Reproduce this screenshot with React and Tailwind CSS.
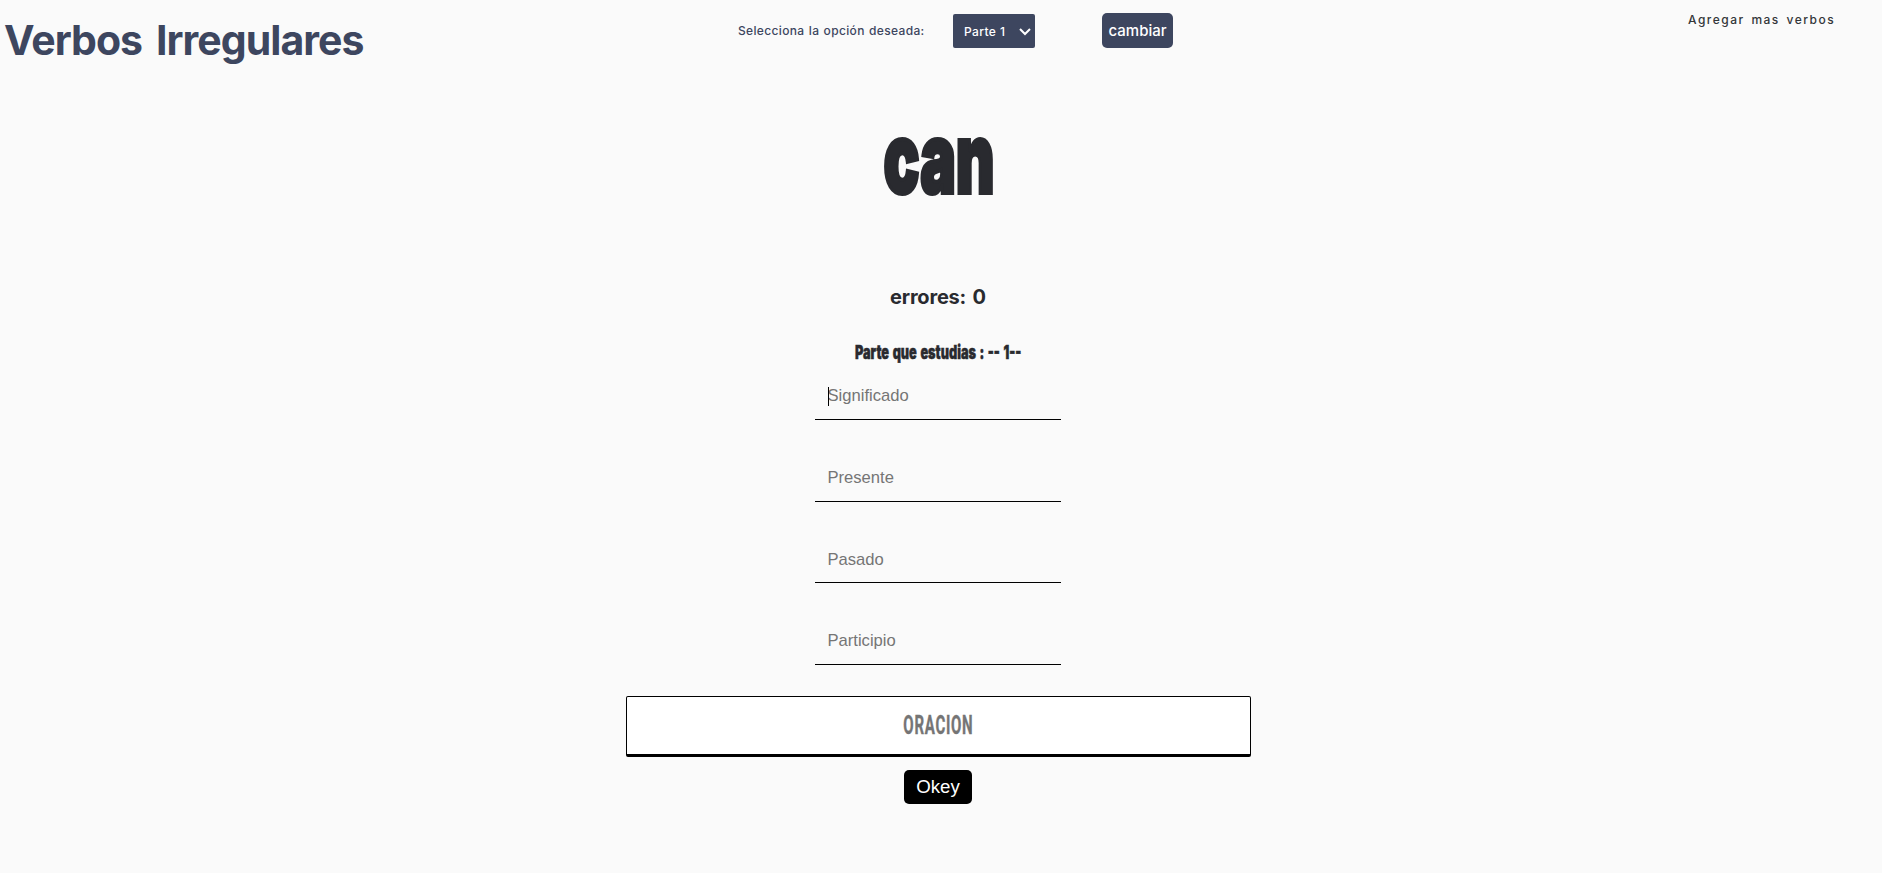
import React from "react";

const fields = [
  { name: "Significado", box: "h-[47px]", pad: "pb-px" },
  { name: "Presente", box: "mt-[35px] h-[47px]", pad: "pb-px" },
  { name: "Pasado", box: "mt-[34px] h-[47px]", pad: "pt-px" },
  { name: "Participio", box: "mt-[35px] h-[47px]", pad: "pb-px" },
];

function Header() {
  return (
    <header className="flex h-[96px] items-start font-['Inter','Noto_Sans',sans-serif] text-[#3d465f]">
      <h1 className="w-[738px] pl-1 pt-[15px] text-[41px] leading-[50px] font-bold whitespace-nowrap tracking-[-0.95px] [word-spacing:5px]">
        Verbos Irregulares
      </h1>
      <span className="w-[215px] pt-[22px] text-[12px] leading-[18px] font-medium whitespace-nowrap tracking-[0.35px] [word-spacing:0.7px]">
        Selecciona la opción deseada:
      </span>
      <button className="mt-[14px] flex h-[34px] w-[82px] items-center justify-between rounded-[2px] bg-[#3d465f] pl-[11px] pr-[4px] pt-[2px] text-[12px] font-medium text-white">
        <span className="whitespace-nowrap tracking-[0.4px]">Parte 1</span>
        <svg className="h-[12px] w-[12px]" viewBox="0 0 12 12" fill="none" stroke="currentColor" strokeWidth="2">
          <path d="M1 3 L6 8 L11 3" />
        </svg>
      </button>
      <button className="ml-[67px] mt-[13px] h-[35px] w-[71px] rounded-[5px] bg-[#3d465f] pt-px text-[15px] font-medium text-white">
        cambiar
      </button>
      <a className="ml-[515px] pt-[11px] text-[12px] leading-[18px] font-medium whitespace-nowrap tracking-[1.5px] text-[#333639] [word-spacing:2px]">
        Agregar mas verbos
      </a>
    </header>
  );
}

export default function App() {
  return (
    <div className="h-[873px] overflow-hidden bg-[#fafafa] text-[#292a2f]">
      <Header />
      <main className="flex w-[1876px] flex-col items-center">
        <h2 className="flex h-[140px] w-[300px] items-start justify-center pl-[3px] font-['Inter',sans-serif] text-[98px] leading-[124px] font-black">
          <span className="inline-block scale-x-[0.61] [-webkit-text-stroke:4px_#292a2f]">can</span>
        </h2>
        <p className="mt-[46px] h-[30px] font-['Inter',sans-serif] text-[20px] leading-[30px] font-bold whitespace-nowrap tracking-[-0.2px] [word-spacing:2px]">
          errores: 0
        </p>
        <p className="mt-[26px] flex h-[30px] w-[170px] justify-center font-['Inter',sans-serif] text-[19px] leading-[30px] font-black whitespace-nowrap">
          <span className="inline-block scale-x-[0.67] [-webkit-text-stroke:0.5px_#292a2f] [word-spacing:1.5px]">Parte que estudias : -- 1--</span>
        </p>
        <div className="mt-[5px] flex flex-col">
          {fields.map((field, i) => (
            <div key={field.name} className={"relative w-[246px] border-b border-black " + field.box}>
              <input
                placeholder={field.name}
                className={"block h-[46px] w-full bg-transparent pl-[12.5px] pr-[12px] font-['Liberation_Sans',sans-serif] text-[16.6px] outline-none placeholder:text-[#757575] " + field.pad}
              />
              {i === 0 && <i className="absolute left-[13px] top-[14px] h-[19px] w-px bg-black" />}
            </div>
          ))}
        </div>
        <div className="mt-[31px] flex h-[61px] w-[625px] items-center justify-center rounded-[2px] border border-b-[3px] border-black bg-white font-['Roboto',sans-serif] text-[25px] font-bold text-[#757575]">
          <span className="inline-block scale-x-[0.6] tracking-[1.2px] [-webkit-text-stroke:0.4px_#757575]">ORACION</span>
        </div>
        <button className="mt-[13px] h-[34px] w-[68px] rounded-[5px] bg-black font-['Liberation_Sans',sans-serif] text-[18.7px] text-white">
          Okey
        </button>
      </main>
    </div>
  );
}
